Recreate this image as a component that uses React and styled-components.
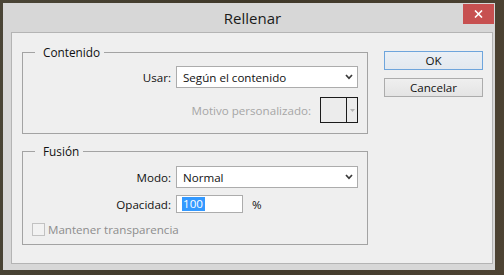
import styled, { createGlobalStyle } from 'styled-components'

const GlobalStyle = createGlobalStyle`
  html, body {
    margin: 0;
    height: 100%;
    background: linear-gradient(100deg, #4a4536 0%, #3f3829 45%, #4d4333 100%);
    font-family: "Open Sans", "Noto Sans", "DejaVu Sans", sans-serif;
    font-size: 11.6px;
    color: #111;
  }
`

const Window = styled.div`
  margin: 3px 0 0 3px;
  width: 492px;
  height: 267px;
  box-sizing: border-box;
  background: #d7d7d7;
  display: flex;
  flex-direction: column;
`

const TitleBar = styled.div`
  height: 29px;
  display: grid;
  grid-template-columns: 1fr auto 1fr;
  padding: 0 1px 0 8px;
`

const Title = styled.div`
  grid-column: 2;
  align-self: center;
  font-size: 15px;
  color: #1a1a1a;
  padding-top: 1px;
`

const CloseButton = styled.div`
  grid-column: 3;
  justify-self: end;
  align-self: start;
  margin-top: 1px;
  width: 31px;
  height: 20px;
  background: #c75050;
  display: flex;
  align-items: center;
  justify-content: center;
`

const Client = styled.div`
  margin-left: 8px;
  width: 482px;
  height: 232px;
  box-sizing: border-box;
  border: 1px solid #b4b4b4;
  background: #efefef;
  display: flex;
  padding: 11px 0 0 10px;
`

const Groups = styled.div`
  display: flex;
  flex-direction: column;
  gap: 9px;
`

const Group = styled.fieldset`
  margin: 0;
  width: 346px;
  box-sizing: border-box;
  border: 1px solid #a3a3a3;
  padding: ${({ $top }) => $top}px 9px ${({ $bottom }) => $bottom}px 0;
  min-inline-size: 0;
`

const Legend = styled.legend`
  margin-left: 12px;
  padding: 0 4px 0 8px;
  line-height: 16px;
  font-size: 11.8px;
  color: #111;
`

const Row = styled.div`
  display: flex;
  align-items: center;
  height: ${({ $h }) => $h}px;
  margin-top: ${({ $mt }) => $mt || 0}px;
  justify-content: ${({ $end }) => ($end ? 'flex-end' : 'flex-start')};
`

const Label = styled.span`
  width: 148px;
  text-align: right;
  margin-right: 5px;
  color: ${({ $disabled }) => ($disabled ? '#a5a5a5' : '#111')};
`

const FreeLabel = styled.span`
  color: ${({ $tone }) => $tone || '#111'};
  margin-right: ${({ $mr }) => $mr || 0}px;
`

const Select = styled.div`
  width: 182px;
  height: 22px;
  box-sizing: border-box;
  border: 1px solid #acacac;
  background: #fff;
  display: flex;
  align-items: center;
  justify-content: space-between;
  padding: 0 4px 0 6px;
`

const Swatch = styled.div`
  width: 38px;
  height: 26px;
  box-sizing: border-box;
  border: 1px solid #1c1c1c;
  background: #ececec;
  display: flex;
`

const SwatchBody = styled.div`
  width: 25px;
  border-right: 1px solid #1c1c1c;
`

const SwatchArrow = styled.div`
  flex: 1;
  display: flex;
  align-items: center;
  justify-content: center;
`

const NumberInput = styled.div`
  width: 67px;
  height: 18px;
  box-sizing: border-box;
  border: 1px solid #acacac;
  background: #fff;
  display: flex;
  align-items: center;
  padding-left: 5px;
  margin-right: 9px;
`

const Selected = styled.span`
  background: #3399ff;
  color: #fff;
  line-height: 14px;
  padding: 0 2px 0 1px;
`

const CheckRow = styled.div`
  display: flex;
  align-items: center;
  margin: 10px 0 0 9px;
  height: 13px;
`

const Checkbox = styled.span`
  width: 13px;
  height: 13px;
  box-sizing: border-box;
  border: 1px solid #c2c2c2;
  background: #f2f2f2;
  margin-right: 3px;
`

const Buttons = styled.div`
  margin: 7px 0 0 16px;
  display: flex;
  flex-direction: column;
  gap: 8px;
`

const Button = styled.div`
  width: 99px;
  height: 19px;
  box-sizing: border-box;
  border: 1px solid ${({ $default }) => ($default ? '#6ea5dc' : '#acacac')};
  background: ${({ $default }) =>
    $default ? 'linear-gradient(#eaf0f6, #e3e8ee)' : 'linear-gradient(#efefef, #e4e4e4)'};
  display: flex;
  align-items: center;
  justify-content: center;
  color: #111;
`

const Chevron = () => (
  <svg width="8" height="6" viewBox="0 0 8 6">
    <polyline points="1,1 4,4.3 7,1" fill="none" stroke="#3a3a3a" strokeWidth="1.7" />
  </svg>
)

export default function App() {
  return (
    <>
      <GlobalStyle />
      <Window>
        <TitleBar>
          <Title>Rellenar</Title>
          <CloseButton>
            <svg width="9" height="8" viewBox="0 0 9 8">
              <path d="M1 0.5 L8 7.5 M8 0.5 L1 7.5" stroke="#fff" strokeWidth="1.6" />
            </svg>
          </CloseButton>
        </TitleBar>
        <Client>
          <Groups>
            <Group $top={6} $bottom={10}>
              <Legend>Contenido</Legend>
              <Row $h={22}>
                <Label>Usar:</Label>
                <Select>
                  Según el contenido
                  <Chevron />
                </Select>
              </Row>
              <Row $h={26} $mt={9} $end>
                <FreeLabel $tone="#a6a6a6" $mr={9}>Motivo personalizado:</FreeLabel>
                <Swatch>
                  <SwatchBody />
                  <SwatchArrow>
                    <svg width="5" height="3" viewBox="0 0 5 3">
                      <polygon points="0,0 5,0 2.5,3" fill="#b5b5b5" />
                    </svg>
                  </SwatchArrow>
                </Swatch>
              </Row>
            </Group>
            <Group $top={7} $bottom={8}>
              <Legend>Fusión</Legend>
              <Row $h={22}>
                <Label>Modo:</Label>
                <Select>
                  Normal
                  <Chevron />
                </Select>
              </Row>
              <Row $h={18} $mt={7}>
                <Label>Opacidad:</Label>
                <NumberInput>
                  <Selected>100</Selected>
                </NumberInput>
                <FreeLabel>%</FreeLabel>
              </Row>
              <CheckRow>
                <Checkbox />
                <FreeLabel $tone="#8d8d8d">Mantener transparencia</FreeLabel>
              </CheckRow>
            </Group>
          </Groups>
          <Buttons>
            <Button $default>OK</Button>
            <Button>Cancelar</Button>
          </Buttons>
        </Client>
      </Window>
    </>
  )
}
